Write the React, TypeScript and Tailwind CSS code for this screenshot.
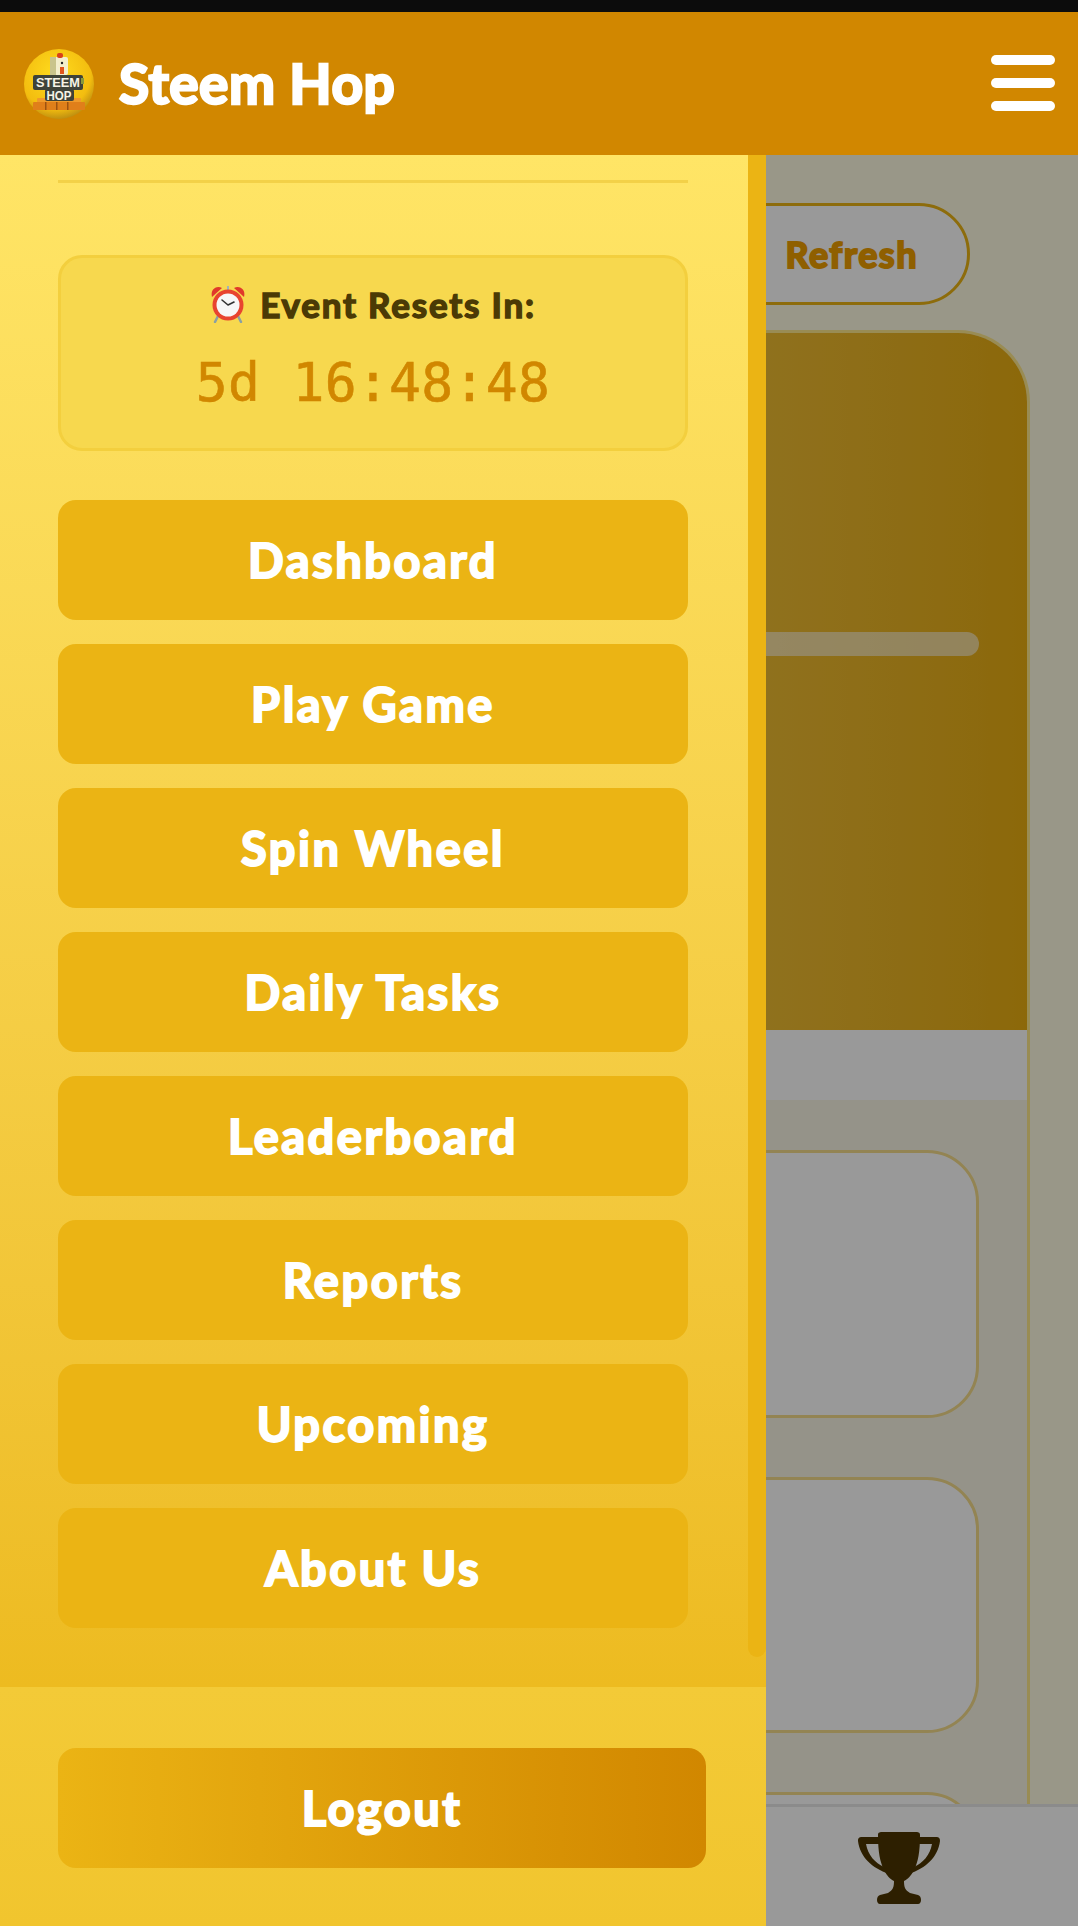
const navItems = ["Dashboard", "Play Game", "Spin Wheel", "Daily Tasks", "Leaderboard", "Reports", "Upcoming", "About Us"];

function Logo() {
  return (
    <svg width="72" height="72" viewBox="0 0 72 72" className="shrink-0">
      <defs>
        <radialGradient id="ball" cx="0.45" cy="0.35" r="0.72">
          <stop offset="0" stopColor="#ffdc1e" />
          <stop offset="0.7" stopColor="#f3bd0f" />
          <stop offset="1" stopColor="#a87c12" />
        </radialGradient>
      </defs>
      <circle cx="36" cy="36" r="35" fill="url(#ball)" />
      {/* bricks */}
      <rect x="14" y="50" width="44" height="6" rx="1" fill="#f09a2a" />
      <rect x="10" y="54" width="52" height="8" rx="1" fill="#e07f1a" />
      <rect x="22" y="54" width="1.5" height="8" fill="#9c5210" />
      <rect x="33" y="54" width="1.5" height="8" fill="#9c5210" />
      <rect x="44" y="54" width="1.5" height="8" fill="#9c5210" />
      {/* chicken */}
      <rect x="27" y="9" width="18" height="18" rx="2" fill="#f3eecb" />
      <rect x="27" y="9" width="6" height="18" fill="#c9c48b" />
      <rect x="34" y="5" width="6" height="5" rx="2" fill="#d9401a" />
      <rect x="37" y="19" width="4" height="7" fill="#e2541b" />
      <circle cx="39" cy="15" r="1.2" fill="#222" />
      {/* sign */}
      <rect x="10" y="27" width="50" height="15" rx="2" fill="#3f4339" />
      <rect x="58" y="30" width="3" height="6" fill="#8a9a3a" />
      <rect x="22" y="41" width="29" height="12" rx="2" fill="#3f4339" />
      <text x="35" y="39" textAnchor="middle" fontSize="13" fontWeight="700" fill="#f6f3e6" className="font-['Liberation_Sans',sans-serif]" textLength="44" lengthAdjust="spacingAndGlyphs">STEEM</text>
      <text x="36" y="51.5" textAnchor="middle" fontSize="12.5" fontWeight="700" fill="#f6f3e6" className="font-['Liberation_Sans',sans-serif]" textLength="25" lengthAdjust="spacingAndGlyphs">HOP</text>
    </svg>
  );
}

function AlarmClock() {
  return (
    <svg width="36" height="38" viewBox="0 0 36 38" className="shrink-0">
      <path d="M2 12 C0 5 6 0 12 3 Z" fill="#e0392b" />
      <path d="M34 12 C36 5 30 0 24 3 Z" fill="#e0392b" />
      <rect x="17" y="1" width="2" height="4" fill="#9fb4b8" />
      <path d="M8 31 L5 37 M28 31 L31 37" stroke="#8aa0a4" strokeWidth="2.5" strokeLinecap="round" />
      <circle cx="18" cy="20" r="15.5" fill="#e8442f" />
      <circle cx="18" cy="20" r="11.5" fill="#f7f7f7" />
      <path d="M18 20 L12 15 M18 20 L24 17" stroke="#333" strokeWidth="1.6" strokeLinecap="round" />
    </svg>
  );
}

function Trophy() {
  return (
    <svg width="82" height="72" viewBox="0 0 82 72" fill="#4b3500">
      <path d="M20 3 C20 0 22 0 25 0 L57 0 C60 0 62 0 62 3 C62 20 60 30 56 38 C53 44 50 47 46 49 C46 55 47 58 52 61 L60 63 C64 64 64 72 60 72 L22 72 C18 72 18 64 22 63 L30 61 C35 58 36 55 36 49 C32 47 29 44 26 38 C22 30 20 20 20 3 Z" />
      <path d="M22 5 L4 5 C1 5 0 6 0 9 C2 25 14 36 31 42 L26 35 C17 31 10 23 8 12 L22 12 Z" />
      <path d="M60 5 L78 5 C81 5 82 6 82 9 C80 25 68 36 51 42 L56 35 C65 31 72 23 74 12 L60 12 Z" />
    </svg>
  );
}

export default function App() {
  return (
    <div className="relative flex h-[1926px] w-[1078px] flex-col overflow-hidden bg-[#fffce3] font-['Lato',sans-serif]">
      <div className="relative z-20 h-[12px] bg-[#0c0c0c]" />

      {/* Header */}
      <header className="relative z-20 flex h-[143px] items-center justify-between bg-[#d18700] px-[23px]">
        <div className="flex items-center gap-[24px]">
          <Logo />
          <h1 className="text-[55px] leading-none font-bold tracking-[0.5px] text-white [-webkit-text-stroke:2.5px_white]">Steem Hop</h1>
        </div>
        <button className="mb-[2px] flex w-[64px] flex-col gap-[13px]">
          <span className="h-[10px] rounded-full bg-white" />
          <span className="h-[10px] rounded-full bg-white" />
          <span className="h-[10px] rounded-full bg-white" />
        </button>
      </header>

      {/* Page behind the drawer */}
      <main className="flex flex-1 flex-col overflow-hidden px-[48px] pt-[48px]">
        <div className="mr-[60px] flex justify-end">
          <button className="h-[102px] w-[300px] rounded-full border-[3px] border-[#ebb414] bg-white pr-[49px] text-right text-[36px] font-bold tracking-[1.5px] text-[#ee9e00] [-webkit-text-stroke:2px_#ee9e00]">
            Refresh
          </button>
        </div>

        <section className="mt-[25px] flex-1 rounded-t-[72px] border-x-[3px] border-t-[3px] border-[#ffe98d] bg-[#f8f5e4]">
          <div className="h-[697px] rounded-t-[69px] bg-gradient-to-r from-[#ffe566] to-[#e9ae10] px-[48px] pt-[299px]">
            <div className="h-[24px] rounded-full bg-white/55" />
          </div>
          <div className="h-[70px] bg-white" />
          <div className="flex flex-col gap-[59px] px-[48px] pt-[50px]">
            <div className="h-[268px] rounded-[52px] border-[3px] border-[#f5dc8a] bg-white" />
            <div className="h-[256px] rounded-[52px] border-[3px] border-[#f5dc8a] bg-white" />
            <div className="h-[256px] rounded-[52px] border-[3px] border-[#f5dc8a] bg-white" />
          </div>
        </section>
      </main>

      {/* Bottom nav */}
      <nav className="absolute inset-x-0 bottom-0 flex h-[122px] justify-end border-t-[3px] border-[#e8e8e8] bg-white pt-[25px] pr-[138px]">
        <div>
          <Trophy />
        </div>
      </nav>

      {/* Dim overlay */}
      <div className="absolute inset-x-0 top-[155px] bottom-0 bg-black/40" />

      {/* Drawer */}
      <aside className="absolute top-[155px] bottom-0 left-0 z-10 flex w-[766px] flex-col">
        <div className="flex h-[1532px] bg-gradient-to-b from-[#ffe566] to-[#edbb20]">
          <div className="flex-1 pr-[60px] pl-[58px]">
            <div className="mt-[25px] h-[3px] bg-[#f3d148]" />
            <div className="mt-[72px] flex h-[196px] flex-col items-center rounded-[24px] border-[3px] border-[#f3cf3e] bg-[#f7d84e] pt-[27px]">
              <div className="flex items-center gap-[14px]">
                <AlarmClock />
                <span className="text-[35px] leading-none font-bold tracking-[1.8px] text-[#4b3a05] [-webkit-text-stroke:1.5px_#4b3a05]">Event Resets In:</span>
              </div>
              <div className="mt-[33px] font-['DejaVu_Sans_Mono',monospace] text-[53px] leading-none tracking-[0.3px] text-[#d18700] [-webkit-text-stroke:0.6px_#d18700]">
                5d 16:48:48
              </div>
            </div>
            <div className="mt-[49px] flex flex-col gap-[24px]">
              {navItems.map((item) => (
                <a
                  key={item}
                  className="flex h-[120px] items-center justify-center rounded-[18px] bg-[#ebb414] text-[47px] font-bold tracking-[2.5px] text-white [-webkit-text-stroke:2px_white]"
                >
                  {item}
                </a>
              ))}
            </div>
          </div>
          <div className="w-[18px]">
            <div className="h-[1502px] rounded-b-full bg-[#ebb414]" />
          </div>
        </div>

        <div className="flex-1 bg-gradient-to-b from-[#f3ca37] to-[#f1c52e] pt-[61px] pr-[60px] pl-[58px]">
          <button className="h-[120px] w-full rounded-[18px] bg-gradient-to-r from-[#ebb414] to-[#d18700] text-[47px] font-bold tracking-[2.5px] text-white [-webkit-text-stroke:2px_white]">
            Logout
          </button>
        </div>
      </aside>
    </div>
  );
}
